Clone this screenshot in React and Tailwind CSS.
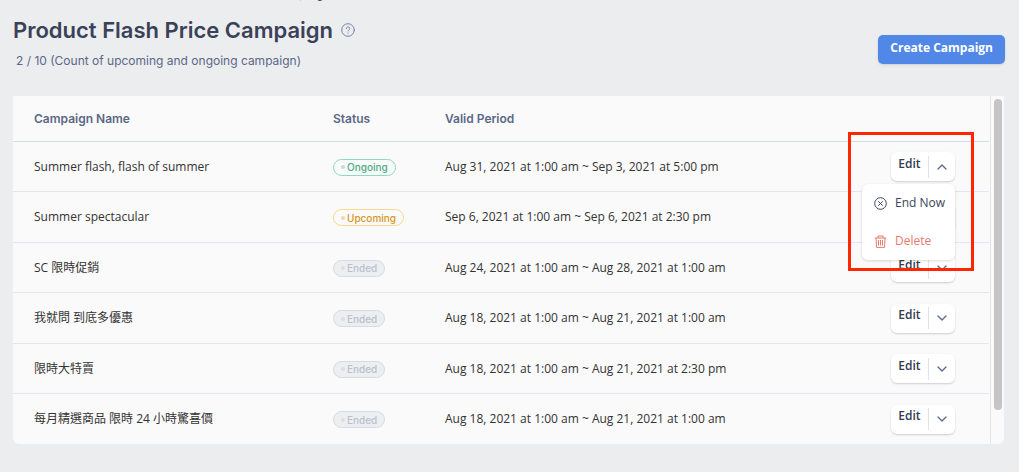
import React, { useState } from 'react';
import { ChevronDown, ChevronUp } from 'lucide-react';

const campaigns = [
  { name: 'Summer flash, flash of summer', status: 'Ongoing', period: 'Aug 31, 2021 at 1:00 am ~ Sep 3, 2021 at 5:00 pm' },
  { name: 'Summer spectacular', status: 'Upcoming', period: 'Sep 6, 2021 at 1:00 am ~ Sep 6, 2021 at 2:30 pm' },
  { name: 'SC 限時促銷', status: 'Ended', period: 'Aug 24, 2021 at 1:00 am ~ Aug 28, 2021 at 1:00 am' },
  { name: '我就問 到底多優惠', status: 'Ended', period: 'Aug 18, 2021 at 1:00 am ~ Aug 21, 2021 at 1:00 am' },
  { name: '限時大特賣', status: 'Ended', period: 'Aug 18, 2021 at 1:00 am ~ Aug 21, 2021 at 2:30 pm' },
  { name: '每月精選商品 限時 24 小時驚喜價', status: 'Ended', period: 'Aug 18, 2021 at 1:00 am ~ Aug 21, 2021 at 1:00 am' },
];

const statusStyles = {
  Ongoing: 'border-[#8fd9bd] text-[#4cab86]',
  Upcoming: 'border-[#fbd88d] text-[#d69622]',
  Ended: 'border-[#d3dce6] bg-[#eceef0] text-[#b9c0d0]',
};

const StatusBadge = ({ status }) => (
  <span className={`inline-flex h-[17px] items-center gap-0.5 rounded-full border px-[7px] align-middle font-[Inter,sans-serif] text-[10px] font-medium leading-none ${statusStyles[status]}`}>
    <span className="h-1 w-1 rounded-full bg-current opacity-35" />
    {status}
  </span>
);

const ActionMenu = () => (
  <div role="menu" className="absolute right-0 top-8 z-10 w-[93px] rounded-md bg-white shadow-[0_1px_3px_rgba(0,0,0,0.15)]">
    <button role="menuitem" className="flex h-[38px] w-full items-center gap-2 pl-3 text-[#3a4459]">
      <svg width="13" height="13" viewBox="0 0 13 13" fill="none" stroke="currentColor" aria-hidden="true">
        <circle cx="6.5" cy="6.5" r="5.8" />
        <path d="m4.3 4.3 4.4 4.4m0-4.4-4.4 4.4" />
      </svg>
      End Now
    </button>
    <button role="menuitem" className="flex h-[38px] w-full items-center gap-2 pl-3 text-[#e9796c]">
      <svg width="13" height="13" viewBox="0 0 13 13" fill="none" stroke="currentColor" aria-hidden="true">
        <path d="M.8 3h11.4M4 3V1h5v2M2 3l.5 9.4h8L11 3M4.5 5v5.5M6.5 5v5.5M8.5 5v5.5" />
      </svg>
      Delete
    </button>
  </div>
);

const RowActions = ({ open, onToggle }) => (
  <div className="relative ml-auto flex h-[29px] w-16 items-center rounded-md bg-white shadow-[0_1px_2px_rgba(0,0,0,0.18)]">
    <button className="h-full flex-1 pb-1.5 text-center font-semibold text-[#333c50]">Edit</button>
    <span className="h-[22px] w-px bg-[#dfe3ee]" />
    <button
      aria-label="More actions"
      aria-expanded={open}
      onClick={onToggle}
      className="flex h-full w-[26px] items-center justify-center text-[#5c6b8e]"
    >
      {open ? <ChevronUp size={16} strokeWidth={2} /> : <ChevronDown size={16} strokeWidth={2} />}
    </button>
    {open && <ActionMenu />}
  </div>
);

const App = () => {
  const [openRow, setOpenRow] = useState(0);

  return (
    <div className="min-h-screen bg-[#ecedef] pl-[13px] pr-3.5 font-['Open_Sans','Noto_Sans_CJK_TC',sans-serif] text-xs text-[#333333]">
      {/* breadcrumb, scrolled almost out of view */}
      <nav className="flex h-[2px] items-end overflow-hidden pl-[260px] font-[Inter,sans-serif] leading-4 text-[#3a4459]">
        Campaign
      </nav>

      <header className="flex items-start justify-between pt-3.5">
        <div className="font-[Inter,sans-serif]">
          <div className="flex items-center gap-2">
            <h1 className="text-[22px] font-semibold leading-7 text-[#3a4258]">Product Flash Price Campaign</h1>
            <button aria-label="Help" className="text-[#7683a3]">
              <svg width="14" height="14" viewBox="0 0 14 14" fill="none" stroke="currentColor" strokeLinecap="round">
                <circle cx="7" cy="7" r="6.3" />
                <path d="M5.2 5.6c0-2.3 3.6-2.2 3.6 0 0 1.3-1.8 1.2-1.8 2.4M7 10v.2" />
              </svg>
            </button>
          </div>
          <p className="mt-[9px] pl-[3px] leading-4 text-[#5b6787]">2 / 10 (Count of upcoming and ongoing campaign)</p>
        </div>
        <button className="mt-[19px] h-[29px] rounded-[5px] bg-[#5187e7] px-3 pb-1 font-bold text-white shadow-sm">
          Create Campaign
        </button>
      </header>

      <section className="relative mr-px mt-[27px] flex rounded-b-md bg-[#fafafa]">
        <table className="flex-1 table-fixed border-collapse text-left">
          <thead className="font-[Inter,sans-serif] text-[#5b6787]">
            <tr className="h-[45px] border-b border-[#d3dce6]">
              <th className="w-[299px] pl-[21px] pt-px font-semibold">Campaign Name</th>
              <th className="w-28 pl-[21px] pt-px font-semibold">Status</th>
              <th className="pl-[21px] pt-px font-semibold">Valid Period</th>
              <th aria-label="Actions" className="w-[120px]" />
            </tr>
          </thead>
          <tbody>
            {campaigns.map((campaign, index) => (
              <tr key={index} className="border-b border-[#e3e6ef] odd:h-[50px] even:h-[51px] last:h-[50px] last:border-b-0">
                <td className="pl-[21px] pt-px">{campaign.name}</td>
                <td className="pl-[21px] pt-0.5"><StatusBadge status={campaign.status} /></td>
                <td className="pl-[21px] pt-px">{campaign.period}</td>
                <td className="pr-[34px] pt-px">
                  <RowActions
                    open={openRow === index}
                    onToggle={() => setOpenRow(openRow === index ? null : index)}
                  />
                </td>
              </tr>
            ))}
          </tbody>
        </table>

        {/* scrollbar */}
        <div className="ml-px w-3.5 border-l border-[#e6e6e6] py-[3px] pl-[3px]">
          <div className="h-[91%] w-2 rounded-full bg-[#c5c5c5]" />
        </div>

        {/* highlight frame */}
        <div className="pointer-events-none absolute right-[30px] top-[36px] z-20 h-[139px] w-[126px] border-[3px] border-[#ff2600]" />
      </section>
    </div>
  );
};

export default App;
